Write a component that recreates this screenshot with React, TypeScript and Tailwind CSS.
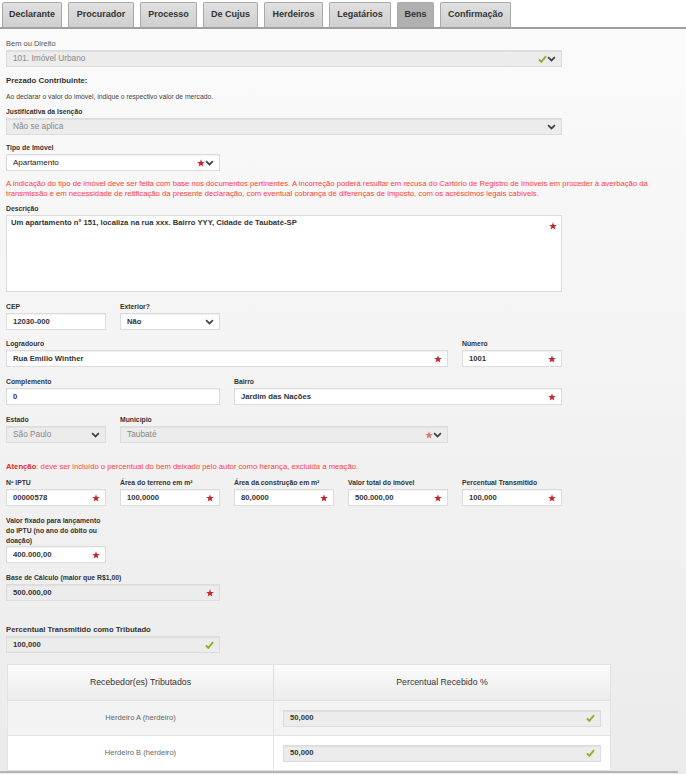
import React from "react";

const tabs = [
  { name: "Declarante", w: "w-[60px]" },
  { name: "Procurador", w: "w-[66px]" },
  { name: "Processo", w: "w-[57px]" },
  { name: "De Cujus", w: "w-[55px]" },
  { name: "Herdeiros", w: "w-[59px]" },
  { name: "Legatários", w: "w-[62px]" },
  { name: "Bens", w: "w-[37px]", active: true },
  { name: "Confirmação", w: "w-[71px]" },
];

function Star({ faded }: { faded?: boolean }) {
  return (
    <svg width="8" height="8" viewBox="0 0 10 10" className="shrink-0">
      <path
        d="M5 0.3 L6.2 3.6 L9.8 3.7 L7 5.9 L8 9.5 L5 7.4 L2 9.5 L3 5.9 L0.2 3.7 L3.8 3.6 Z"
        fill={faded ? "#d9777b" : "#c1272d"}
      />
    </svg>
  );
}

function Check() {
  return (
    <svg width="9" height="8" viewBox="0 0 10 9" className="shrink-0">
      <path d="M1 5 L3.8 7.6 L9 1.2" fill="none" stroke="#8ab526" strokeWidth="2.2" />
    </svg>
  );
}

function Chevron() {
  return (
    <svg width="9" height="6" viewBox="0 0 10 7" className="shrink-0">
      <path d="M1 1.2 L5 5.2 L9 1.2" fill="none" stroke="#444" strokeWidth="2" />
    </svg>
  );
}

type InputProps = {
  value: string;
  disabled?: boolean;
  star?: boolean;
  fadedStar?: boolean;
  check?: boolean;
  chevron?: boolean;
  muted?: boolean;
  regular?: boolean;
};

function Input({ value, disabled, star, fadedStar, check, chevron, muted, regular }: InputProps) {
  return (
    <div
      className={`flex items-center h-[17px] pl-[6px] pr-[5px] text-left border border-[#dcdcdc] shadow-[inset_0_1px_1px_rgba(0,0,0,0.06)] ${
        disabled ? "bg-[#ececec]" : "bg-white"
      }`}
    >
      <span
        className={`flex-1 truncate leading-none ${
          muted
            ? "text-[8.3px] text-[#888] font-normal"
            : regular
            ? "text-[8px] text-[#222]"
            : "text-[7.7px] text-[#333] font-bold"
        }`}
      >
        {value}
      </span>
      <span className="flex items-center">
        {star && <Star faded={fadedStar} />}
        {check && <Check />}
        {chevron && <Chevron />}
      </span>
    </div>
  );
}

function Label({ children, normal }: { children: React.ReactNode; normal?: boolean }) {
  return (
    <div
      className={`leading-[10px] mb-[1px] ${
        normal ? "text-[7.5px] text-[#555]" : "text-[6.8px] font-bold text-[#333]"
      }`}
    >
      {children}
    </div>
  );
}

export default function App() {
  return (
    <div
      className="w-[686px] h-[774px] overflow-hidden bg-gradient-to-b from-[#fbfbfb] to-[#ebebeb]"
      style={{ fontFamily: '"Liberation Sans", Arial, sans-serif' }}
    >
      {/* Tabs */}
      <div className="flex items-end gap-[6px] h-[29px] pl-[2px] border-b-2 border-[#a0a0a0] bg-white">
        {tabs.map((t) => (
          <div
            key={t.name}
            className={`${t.w} h-[25px] flex items-center justify-center border border-b-0 border-[#a9a9a9] rounded-t-[2px] text-[9px] font-bold text-[#333] ${
              t.active ? "bg-[#b0b0b0]" : "bg-gradient-to-b from-[#e0e0e0] to-[#cfcfcf]"
            }`}
          >
            {t.name}
          </div>
        ))}
      </div>

      <div className="pl-[6px]">
        <div className="grid grid-cols-[repeat(5,100px)] gap-x-[14px]">
          <div className="col-span-5 mt-[10px]">
            <Label normal>Bem ou Direito</Label>
            <Input value="101. Imóvel Urbano" disabled muted check chevron />
          </div>
        </div>

        <div className="mt-[9px] text-[7.8px] leading-[10px] font-bold text-[#333]">Prezado Contribuinte:</div>
        <div className="mt-[6px] text-[6.75px] leading-[10px] text-[#444]">
          Ao declarar o valor do imóvel, indique o respectivo valor de mercado.
        </div>

        <div className="grid grid-cols-[repeat(5,100px)] gap-x-[14px]">
          <div className="col-span-5 mt-[5px]">
            <Label>Justificativa da Isenção</Label>
            <Input value="Não se aplica" disabled muted chevron />
          </div>
          <div className="col-span-2 mt-[8px]">
            <Label>Tipo de Imóvel</Label>
            <Input value="Apartamento" regular star chevron />
          </div>
        </div>

        <div className="mt-[8px] w-[664px] text-[7.7px] leading-[10px] text-[#ff3c3c]">
          A indicação do tipo de imóvel deve ser feita com base nos documentos pertinentes. A incorreção poderá
          resultar em recusa do Cartório de Registro de Imóveis em proceder à averbação da transmissão e em
          necessidade de retificação da presente declaração, com eventual cobrança de diferenças de imposto, com os
          acréscimos legais cabíveis.
        </div>

        <div className="grid grid-cols-[repeat(5,100px)] gap-x-[14px]">
          <div className="col-span-5 mt-[5px]">
            <Label>Descrição</Label>
            <div className="h-[77px] flex items-start pl-[4px] pr-[4px] pt-[2px] bg-white border border-[#dcdcdc]">
              <span className="flex-1 text-[7.7px] leading-[10px] font-bold text-[#333]">
                Um apartamento nº 151, localiza na rua xxx. Bairro YYY, Cidade de Taubaté-SP
              </span>
              <span className="mt-[4px]">
                <Star />
              </span>
            </div>
          </div>

          <div className="mt-[10px]">
            <Label>CEP</Label>
            <Input value="12030-000" />
          </div>
          <div className="mt-[10px]">
            <Label>Exterior?</Label>
            <Input value="Não" chevron />
          </div>
          <div className="col-span-3" />

          <div className="col-span-4 mt-[9px]">
            <Label>Logradouro</Label>
            <Input value="Rua Emilio Winther" star />
          </div>
          <div className="mt-[9px]">
            <Label>Número</Label>
            <Input value="1001" star />
          </div>

          <div className="col-span-2 mt-[10px]">
            <Label>Complemento</Label>
            <Input value="0" />
          </div>
          <div className="col-span-3 mt-[10px]">
            <Label>Bairro</Label>
            <Input value="Jardim das Nações" star />
          </div>

          <div className="mt-[10px]">
            <Label>Estado</Label>
            <Input value="São Paulo" disabled muted chevron />
          </div>
          <div className="col-span-3 mt-[10px]">
            <Label>Município</Label>
            <Input value="Taubaté" disabled muted star fadedStar chevron />
          </div>
        </div>

        <div className="mt-[19px] text-[7.7px] leading-[10px] text-[#ff3c3c]">
          <span className="font-bold text-[#e5282d]">Atenção</span>: deve ser incluído o percentual do bem deixado
          pelo autor como herança, excluída a meação.
        </div>

        <div className="grid grid-cols-[repeat(5,100px)] gap-x-[14px]">
          <div className="mt-[6px]">
            <Label>Nº IPTU</Label>
            <Input value="00000578" star />
          </div>
          <div className="mt-[6px]">
            <Label>Área do terreno em m²</Label>
            <Input value="100,0000" star />
          </div>
          <div className="mt-[6px]">
            <Label>Área da construção em m²</Label>
            <Input value="80,0000" star />
          </div>
          <div className="mt-[6px]">
            <Label>Valor total do imóvel</Label>
            <Input value="500.000,00" star />
          </div>
          <div className="mt-[6px]">
            <Label>Percentual Transmitido</Label>
            <Input value="100,000" star />
          </div>

          <div className="mt-[10px]">
            <div className="text-[6.8px] leading-[10px] font-bold text-[#333]">
              Valor fixado para lançamento do IPTU (no ano do óbito ou doação)
            </div>
            <Input value="400.000,00" star />
          </div>
          <div className="col-span-4" />

          <div className="col-span-2 mt-[10px]">
            <Label>Base de Cálculo (maior que R$1,00)</Label>
            <Input value="500.000,00" disabled star />
          </div>
          <div className="col-span-3" />

          <div className="col-span-2 mt-[24px]">
            <div className="text-[7.7px] leading-[10px] font-bold text-[#333] mb-[1px]">
              Percentual Transmitido como Tributado
            </div>
            <Input value="100,000" disabled check />
          </div>
        </div>
      </div>

      {/* Table */}
      <div className="mt-[11px] w-[678px] border-b-2 border-[#b5b5b5]">
        <table className="ml-[7px] w-[604px] border-collapse text-center">
          <thead>
            <tr className="h-[36px] bg-gradient-to-b from-[#fbfbfb] to-[#ececec]">
              <th className="w-[266px] border border-[#e0e0e0] font-normal text-[8.75px] text-[#333]">
                Recebedor(es) Tributados
              </th>
              <th className="border border-[#e0e0e0] font-normal text-[8.75px] text-[#333]">
                Percentual Recebido %
              </th>
            </tr>
          </thead>
          <tbody>
            {["Herdeiro A (herdeiro)", "Herdeiro B (herdeiro)"].map((h, i) => (
              <tr key={h} className={`h-[35px] ${i === 0 ? "bg-[#f3f3f3]" : "bg-white"}`}>
                <td className="border border-[#e3e3e3] text-[7.6px] text-[#666]">{h}</td>
                <td className="border border-[#e3e3e3] px-[9px]">
                  <Input value="50,000" disabled check />
                </td>
              </tr>
            ))}
          </tbody>
        </table>
      </div>
    </div>
  );
}
